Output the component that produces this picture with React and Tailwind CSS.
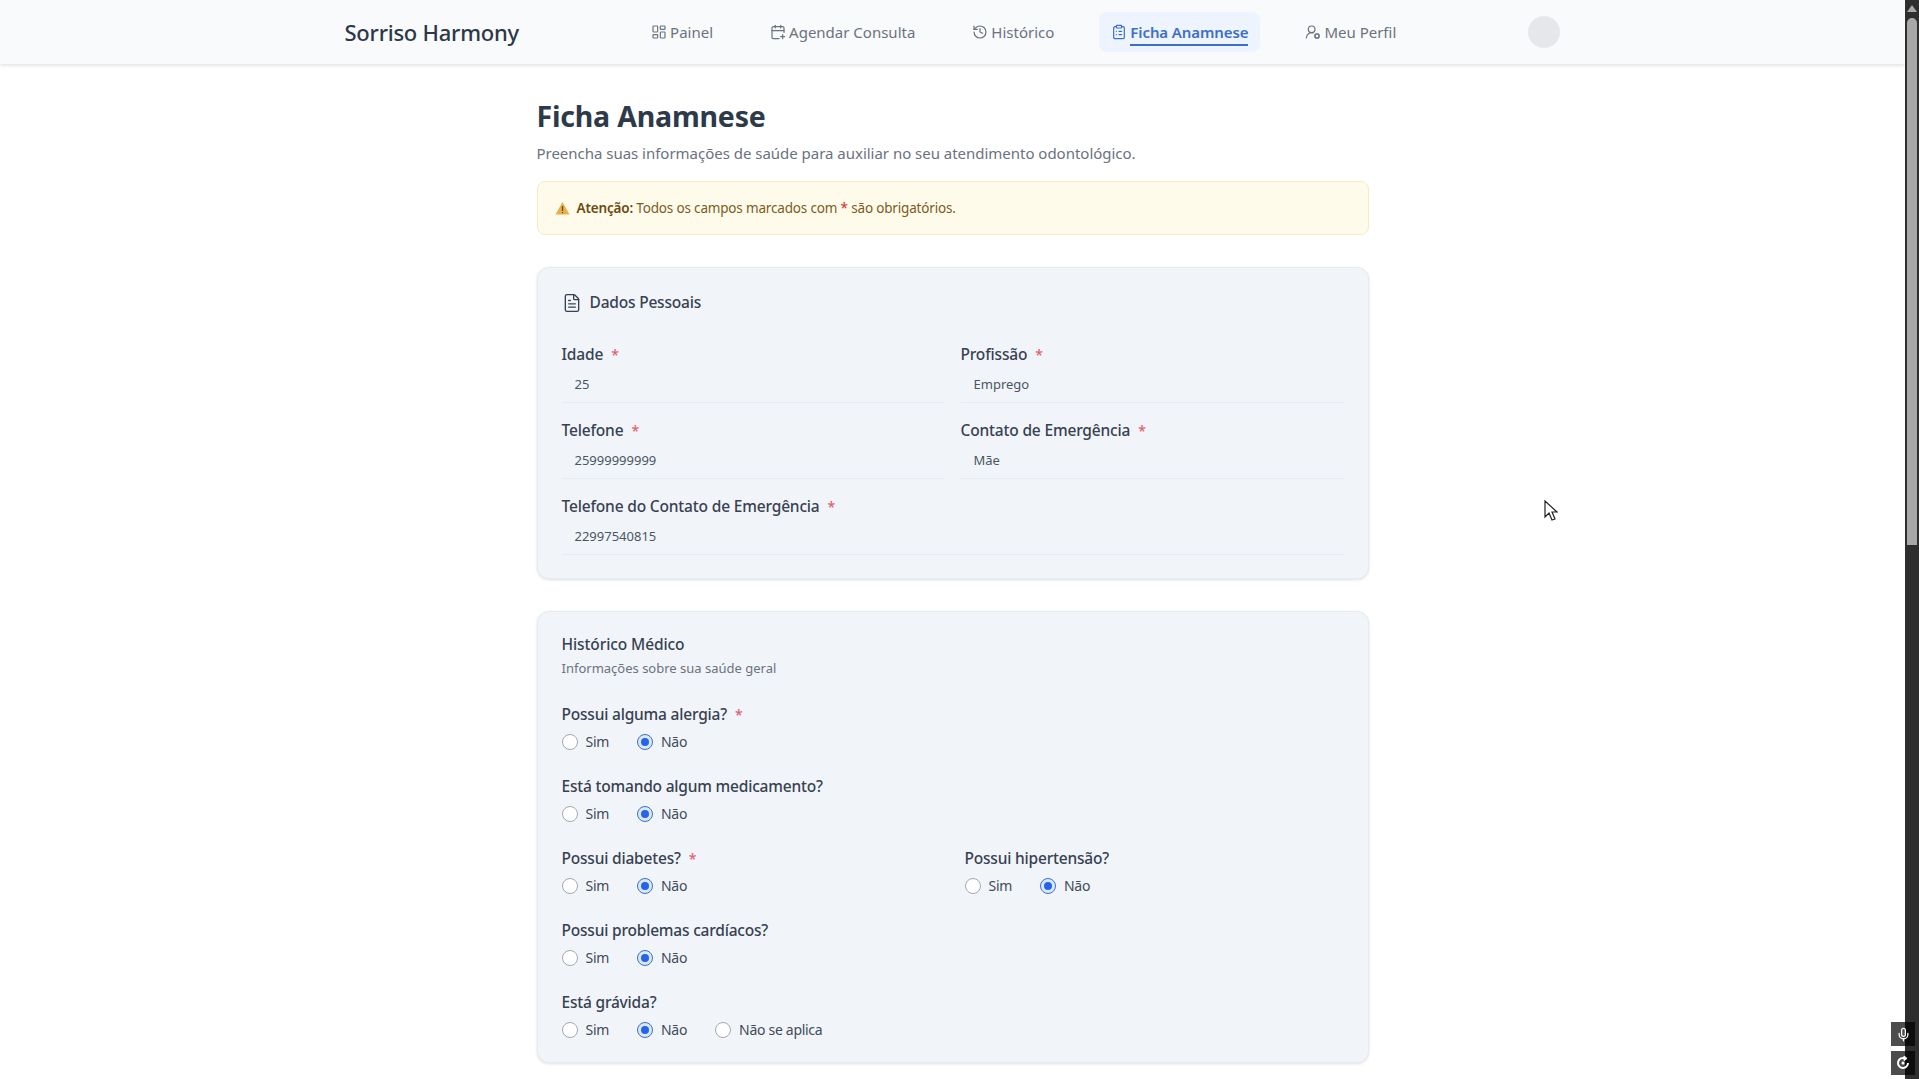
import React from "react";
import { LayoutDashboard, CalendarPlus, History, ClipboardList, UserRoundCog, FileText, Mic } from "lucide-react";

const font = "font-['Noto_Sans','Open_Sans',sans-serif]";

const Req = () => <span className="text-[#e2606f] text-sm ml-2">*</span>;

const Radio = ({ label, checked }) => (
  <label className="flex items-center gap-2">
    {checked ? (
      <span className="w-4 h-4 rounded-full border border-[#3b6fc9] bg-[#dbe8fb] flex items-center justify-center">
        <span className="w-2 h-2 rounded-full bg-[#2563eb]"></span>
      </span>
    ) : (
      <span className="w-4 h-4 rounded-full border border-[#a3a8b0] bg-white"></span>
    )}
    <span className="text-sm text-[#414b58] tracking-[-0.3px]">{label}</span>
  </label>
);

const Question = ({ label, required, extra }) => (
  <div className="h-[72px]">
    <div className="h-[24px] text-[15.5px] font-medium text-[#374151] tracking-[-0.2px] leading-6">
      {label}
      {required && <Req />}
    </div>
    <div className="flex gap-[28px] mt-[4px] h-[24px] items-center">
      <Radio label="Sim" />
      <Radio label="Não" checked />
      {extra && <Radio label={extra} />}
    </div>
  </div>
);

const Field = ({ label, value, wide }) => (
  <div className={"h-[76px] " + (wide ? "col-span-2" : "")}>
    <div className="h-[24px] text-[15.5px] font-medium text-[#374151] tracking-[-0.17px] leading-6">
      {label}
      <Req />
    </div>
    <div className="h-[32px] mt-[5px] pl-[13px] text-[13px] leading-[26px] text-[#4b5563] border-b border-[#e6ebf1]">
      {value}
    </div>
  </div>
);

const NavItem = ({ icon: Icon, label, active }) => (
  <div className={"flex items-center gap-[3px] h-10 px-3 rounded-lg text-[15px] " + (active ? "bg-[#eef4fd] text-[#3b6fc9] font-semibold tracking-[-0.1px]" : "text-[#6b7280]")}>
    <Icon size={16} strokeWidth={1.8} />
    <span className={"h-7 leading-7 " + (active ? "border-b-2 border-[#3b6fc9]" : "")}>{label}</span>
  </div>
);

export default function App() {
  return (
    <div className={"h-screen flex overflow-hidden relative bg-white " + font}>
      <div className="flex-1 min-w-0">
        {/* Header */}
        <header className="h-16 bg-[#f8fafc] shadow-[0_1px_4px_rgba(0,0,0,0.15)]">
          <div className="max-w-7xl mx-auto px-8 h-full flex items-center justify-between">
            <div className="text-[22px] font-medium text-[#2d3748] tracking-[-0.24px]">Sorriso Harmony</div>
            <nav className="flex items-center gap-[33px]">
              <NavItem icon={LayoutDashboard} label="Painel" />
              <NavItem icon={CalendarPlus} label="Agendar Consulta" />
              <NavItem icon={History} label="Histórico" />
              <NavItem icon={ClipboardList} label="Ficha Anamnese" active />
              <NavItem icon={UserRoundCog} label="Meu Perfil" />
            </nav>
            <div className="w-8 h-8 rounded-full bg-[#e5e7eb]"></div>
          </div>
        </header>

        <main className="max-w-4xl mx-auto px-8 pt-[32px]">
          <h1 className="text-[28.5px] leading-10 font-bold text-[#2d3a4a] tracking-[-0.2px]">Ficha Anamnese</h1>
          <p className="mt-[5px] text-[15px] leading-6 text-[#6b7280] tracking-[-0.02px]">
            Preencha suas informações de saúde para auxiliar no seu atendimento odontológico.
          </p>

          <div className="mt-[16px] h-[54px] flex items-center gap-[7px] px-[17px] bg-[#fffbeb] border border-[#f6ecc0] rounded-lg text-[13.5px] tracking-[-0.17px] text-[#7a5b1e]">
            <svg width="15" height="14" viewBox="0 0 15 14">
              <path d="M7.5 1 14.5 13.5H.5z" fill="#e8b04b" />
              <path d="M7.5 5v5M7.5 11v1.2" stroke="#6b4a10" strokeWidth="1.3" />
            </svg>
            <span>
              <b className="font-semibold text-[#6b4a10]">Atenção:</b> Todos os campos marcados com{" "}
              <span className="text-[#dc2626]">*</span> são obrigatórios.
            </span>
          </div>

          {/* Dados Pessoais */}
          <section className="mt-[32px] h-[312px] bg-[#f1f5f9] border border-[#e6ebf1] rounded-xl shadow-[0_1px_3px_rgba(0,0,0,0.12)] px-6 pt-[25px]">
            <div className="flex items-center gap-[8px] h-[20px] text-[15.5px] font-medium text-[#374151] tracking-[-0.2px]">
              <FileText size={20} strokeWidth={1.6} />
              Dados Pessoais
            </div>
            <div className="grid grid-cols-2 gap-x-4 mt-[29px]">
              <Field label="Idade" value="25" />
              <Field label="Profissão" value="Emprego" />
              <Field label="Telefone" value="25999999999" />
              <Field label="Contato de Emergência" value="Mãe" />
              <Field label="Telefone do Contato de Emergência" value="22997540815" wide />
            </div>
          </section>

          {/* Historico Medico */}
          <section className="mt-[32px] h-[452px] bg-[#f1f5f9] border border-[#e6ebf1] rounded-xl shadow-[0_1px_3px_rgba(0,0,0,0.12)] px-6 pt-[20px]">
            <div className="text-[15.5px] leading-6 font-medium text-[#374151] tracking-[-0.1px]">Histórico Médico</div>
            <div className="text-[13px] leading-6 text-[#6b7280]">Informações sobre sua saúde geral</div>
            <div className="mt-[22px]">
              <Question label="Possui alguma alergia?" required />
              <Question label="Está tomando algum medicamento?" />
              <div className="grid grid-cols-2 gap-x-[24px]">
                <Question label="Possui diabetes?" required />
                <Question label="Possui hipertensão?" />
              </div>
              <Question label="Possui problemas cardíacos?" />
              <Question label="Está grávida?" extra="Não se aplica" />
            </div>
          </section>
        </main>
      </div>

      {/* Scrollbar */}
      <div className="w-[14px] shrink-0 bg-[#2e2e2e] flex flex-col items-center pt-[5px]">
        <div className="w-0 h-0 border-x-[5px] border-x-transparent border-b-[7px] border-b-[#a8a8a8]"></div>
        <div className="mt-[6px] w-[10px] h-[527px] bg-[#a8a8a8] rounded-t-[5px]"></div>
      </div>

      {/* Overlay buttons */}
      <div className="absolute right-[4px] bottom-[4px] flex flex-col gap-[5px]">
        <div className="w-6 h-6 bg-black/70 flex items-center justify-center text-white">
          <Mic size={15} />
        </div>
        <div className="w-6 h-6 bg-black/70 flex items-center justify-center text-white">
          <svg width="16" height="16" viewBox="0 0 16 16" fill="none" stroke="currentColor" strokeWidth="2">
            <path d="M13 8a5 5 0 1 1-3-4.6" />
            <path d="M9 1l3 2.4-3 2.2z" fill="currentColor" strokeWidth="1" />
            <circle cx="8" cy="8" r="1.5" fill="currentColor" stroke="none" />
          </svg>
        </div>
      </div>

      {/* Cursor */}
      <svg className="absolute left-[1544px] top-[500px]" width="14" height="21" viewBox="0 0 14 21">
        <path d="M1 1v16l4-4 3 7 3-1-3-7h5z" fill="#fff" stroke="#222" strokeWidth="1.2" />
      </svg>
    </div>
  );
}
